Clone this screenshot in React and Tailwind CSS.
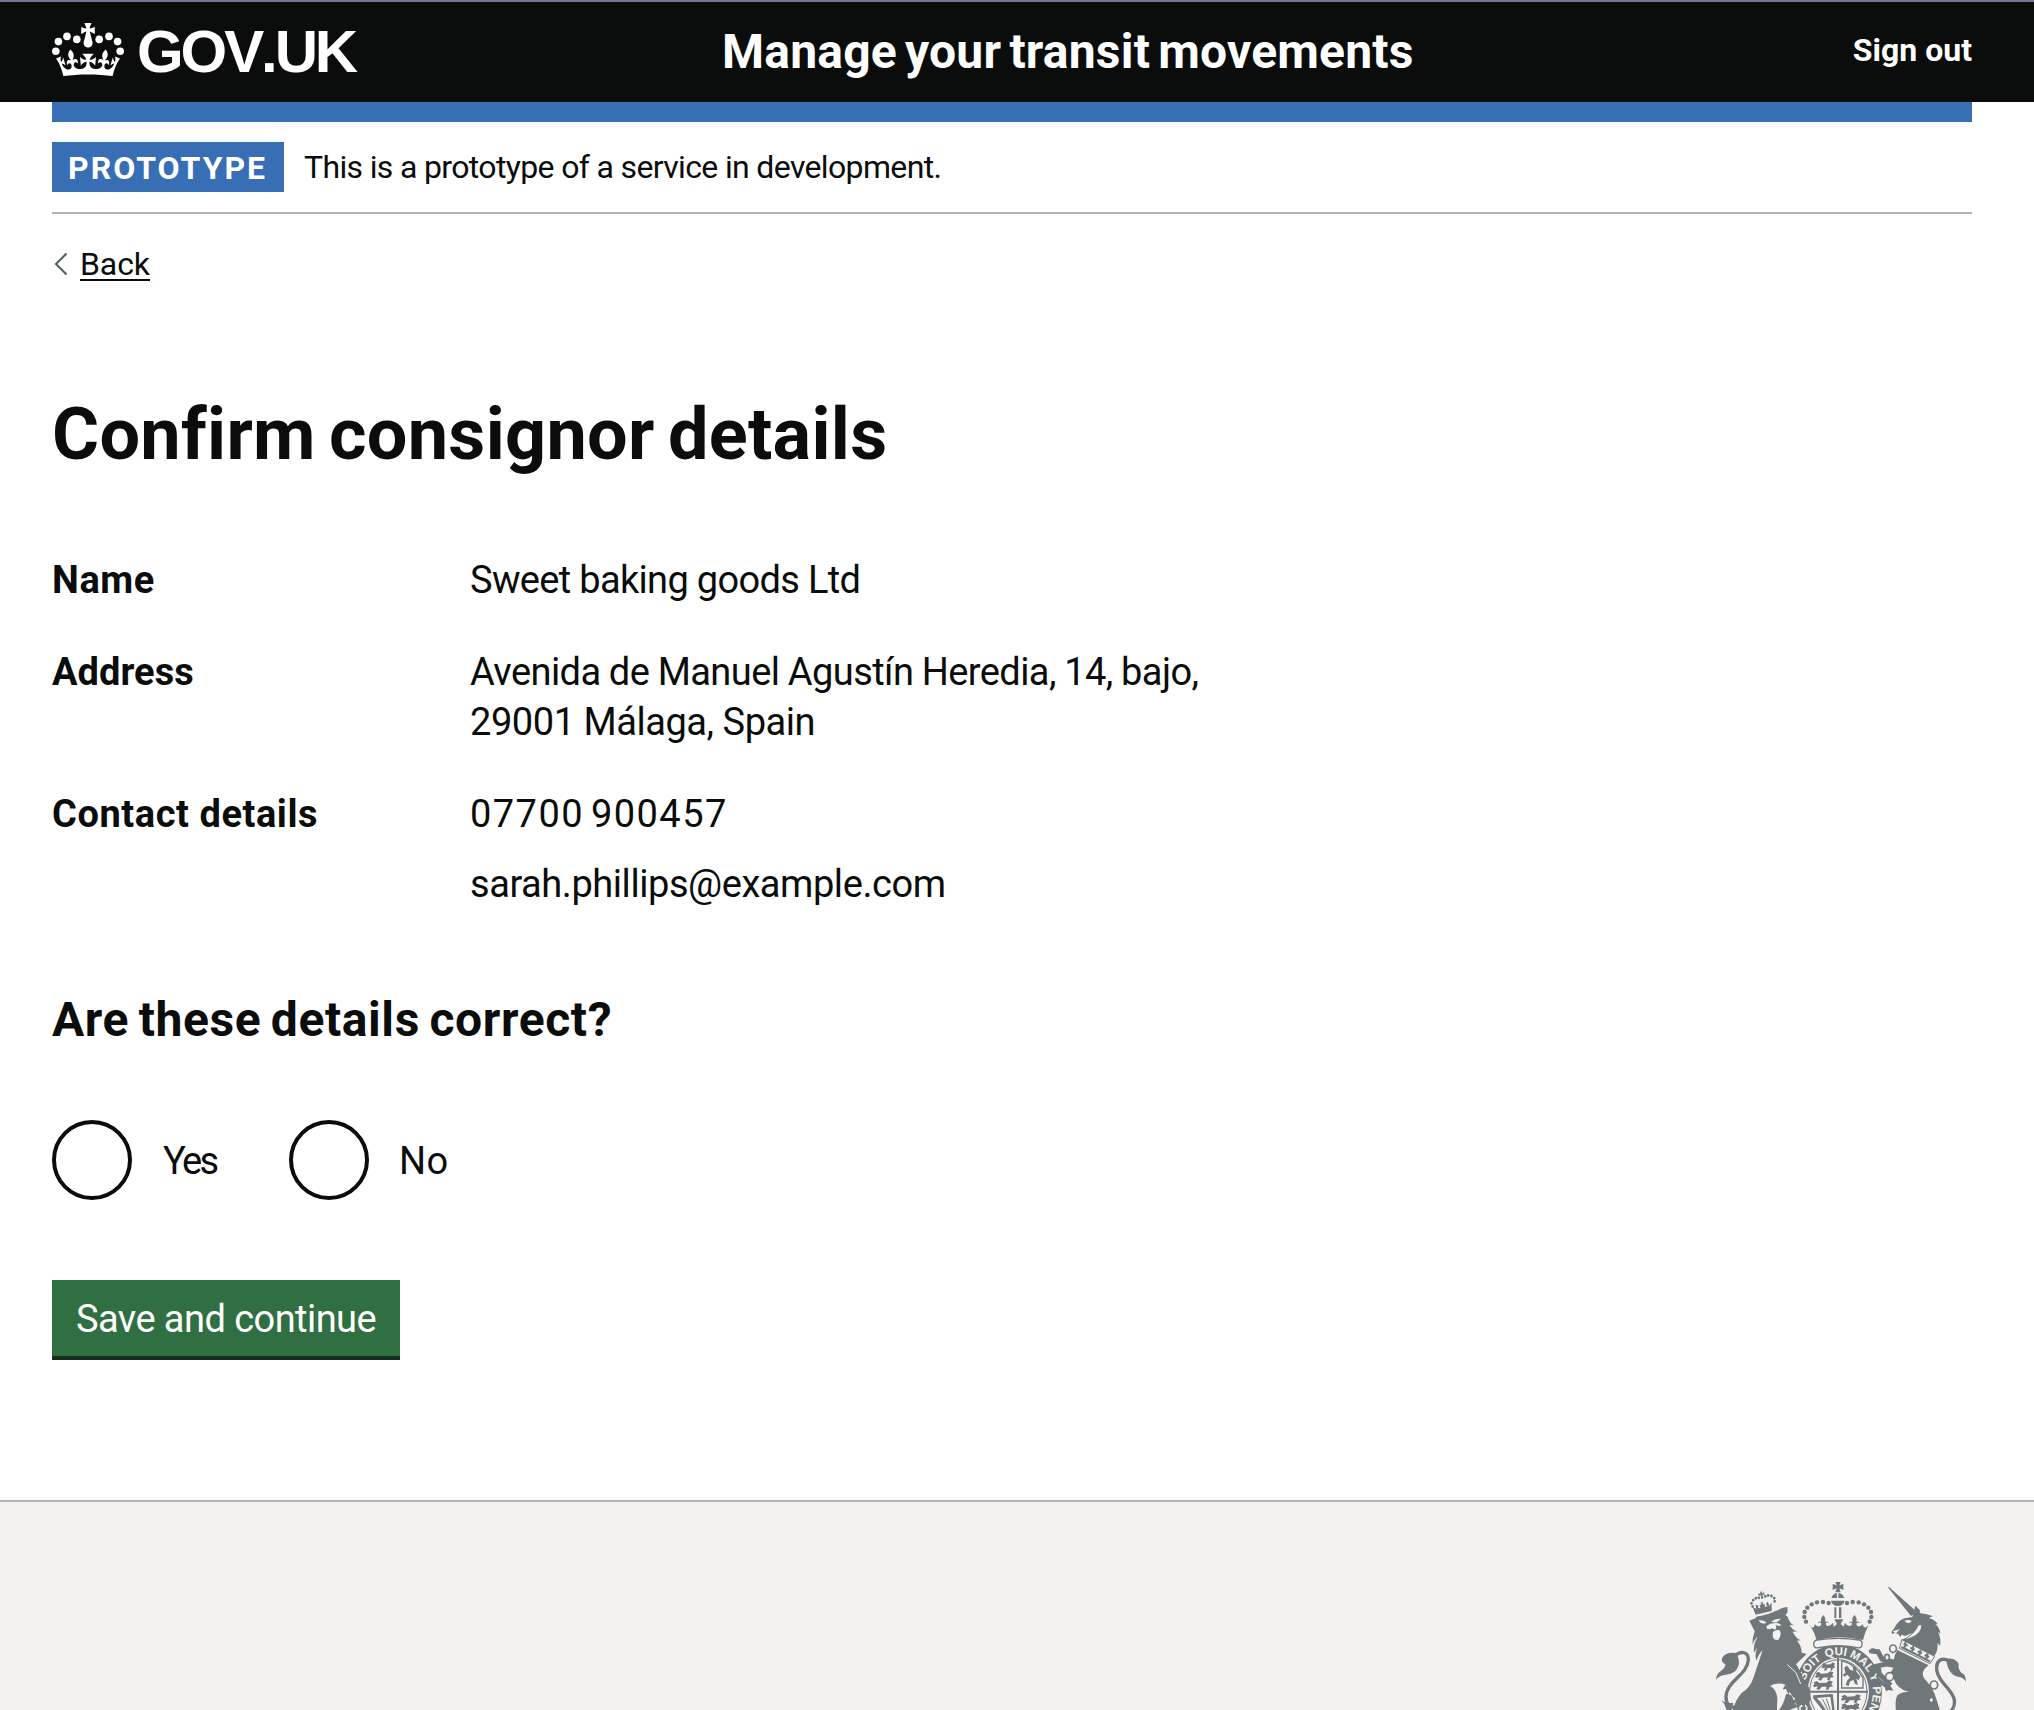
import React from "react";

const CROWN_HALF =
  "M18 29.7c4.4 0 8.6.3 12.3.8 1.1-4.5 2.4-7 3.7-8.8l-2.5-.9c.2 1.3.3 1.9 0 2.7-.4-.4-.8-1.1-1.1-2.3l-1.2 4c.7-.5 1.3-.8 2-.9-1.1 2.5-2.6 3.1-3.5 3-1.1-.2-1.7-1.2-1.5-2.1.3-1.2 1.5-1.5 2.1-.1 1.1-2.3-.8-3-2-2.3 1.9-1.9 2.1-3.5.6-5.6-2.1 1.6-2.1 3.2-1.2 5.5-1.2-1.4-3.2-.6-2.5 1.6.9-1.4 2.1-.5 1.9.8-.2 1.1-1.7 2.1-3.5 1.9-2.7-.2-2.9-2.1-2.9-3.6.7-.1 1.9.5 2.9 1.9l.4-4.3c-1.1 1.1-2.1 1.4-3.2 1.4.4-1.2 2.1-3 2.1-3H17.9V29.7z";

const CROWN_PEARLS = [
  [7.5, 10.7],
  [3.2, 13.3],
  [1.9, 18.1],
  [12.4, 12.2],
];

function Crown() {
  return (
    <svg viewBox="0 0 36 32" className="h-16 w-[72px] shrink-0 fill-white" aria-hidden="true">
      {CROWN_PEARLS.map(([x, y]) => (
        <g key={x}>
          <circle cx={x} cy={y} r="1.9" />
          <circle cx={36 - x} cy={y} r="1.9" />
        </g>
      ))}
      <path d="M19 8.2l2.4 1.3V6l-2.4.8c-.1-.1-.1-.2-.2-.2s1-2.6 1-2.600h-3.6l1 2.6c-.1 0-.1.1-.2.2-.1.1-2.4-.8-2.4-.8v3.5L17 8.2c.1.1.1.2.2.2l-1.3 5c-.1.2-.1.4-.1.6 0 1.2.8 2.1 1.9 2.3h.7c1.1-.2 1.9-1.1 1.9-2.3 0-.2 0-.4-.1-.6l-1.3-5c-.1-.1 0-.1 0-.2z" />
      <path d={CROWN_HALF} />
      <path d={CROWN_HALF} transform="translate(36 0) scale(-1 1)" />
    </svg>
  );
}

const CREST_PEARLS = [
  [386, 99],
  [369, 96],
  [351, 97],
  [335, 103],
  [322, 113],
  [314, 126],
  [313, 141],
  [318, 155],
];

const LION_CROWN_PEARLS = [
  [-34, 4],
  [-35, -6],
  [-28, -14],
  [-19, -18],
  [-10, -17],
  [10, -17],
  [19, -18],
  [28, -14],
  [35, -6],
  [34, 4],
];

const MOTTO = [
  ["O", "18%"],
  ["SOIT", "36%"],
  ["QUI", "48.9%"],
  ["MAL", "60.6%"],
  ["Y", "69%"],
  ["PEN", "78%"],
];

const PASSANT = "M0 4l7-4 5 5 14-1 6-5 7 3-3 6 4 5-7 1-3 7-5-1 2-6-10 0-5 7-6-1 3-8-7 3-3-4 4-3z";

function RoyalArms() {
  return (
    <svg viewBox="0 0 840 420" className="h-[140px] w-[280px] fill-[#6f777b]" aria-hidden="true">
      {/* Crown above the shield */}
      <path d="M406 36h16l-4 10 12-4v18l-12-5 4 12h-16l4-12-12 5v-18l12 4z" />
      <path d="M406 70h5v14h-17q3-10 12-14zM415 70h5q10 4 13 14h-18z" />
      <path d="M393 92h41q-3 15-20 16-18-1-21-16z" />
      {CREST_PEARLS.map(([x, y]) => (
        <g key={x}>
          <circle cx={x} cy={y} r="6.6" />
          <circle cx={827 - x} cy={y} r="6.6" />
        </g>
      ))}
      <path d="M403 112h6v32h-6zM417 112h7v32h-7z" />
      <path d="M328 166q6 9 14 5l2-8q8 8 14 6 8-3 5-10-5-3-10 1 2-8 11-5-4-10 6-20 9 10 5 20 9-3 12 5-5-4-9-1-2 7 5 9 8 1 16-10l2 12 10-8-8-14h27l-8 14 10 8 2-12q8 11 16 10 7-2 5-9-4-3-9 1 3-8 12-5-4-10 5-20 10 10 6 20 9-3 11 5-5-4-10-1-3 7 5 10 6 2 14-6l2 8q8 4 14-5-10 20-16 44-72-17-140 0-4-20-19-44z" />

      {/* Garter, cap band and shield */}
      <ellipse cx="415" cy="365" rx="131" ry="143" />
      <path
        d="M350 210q64-10 128 0 10 2 8 14-2 12-14 9-58-12-116 0-14 3-15-9 0-12 9-14z"
        className="fill-[#f3f2f1] stroke-[#6f777b] stroke-[4]"
      />
      <path id="garter" d="M415 474a104 109 0 0 1 0-218a104 109 0 0 1 0 218" fill="none" />
      {MOTTO.map(([word, at]) => (
        <text
          key={word}
          textAnchor="middle"
          className="fill-[#f3f2f1] text-[35px] font-bold [font-family:'Liberation_Sans',sans-serif]"
        >
          <textPath href="#garter" startOffset={at}>
            {word}
          </textPath>
        </text>
      ))}
      <ellipse cx="415" cy="365" rx="92" ry="102" className="fill-[#f3f2f1]" />
      <ellipse cx="415" cy="365" rx="86" ry="96" className="fill-none stroke-[#6f777b] stroke-[3]" />
      <path d="M411 264h6v156h-6zM326 362h178v6H326z" />
      <path d={PASSANT} transform="translate(366 278) scale(1 1.15)" />
      <path d={PASSANT} transform="translate(346 305) scale(1.4 1.25)" />
      <path d={PASSANT} transform="translate(340 333) scale(1.5 1.25)" />
      <path d="M425 272q44 12 64 52v30h-64z" className="fill-none stroke-[#6f777b] stroke-[4]" />
      <path d="M433 292l9-5 8 12 10 3-2-14 9 3 2 14 12 14-5 12-7-5 5 18-9-2-5-12-10 4-4 14-9-3 5-14 8-8-8-9-8 6-6-6 8-5z" />
      <path d="M340 376l58-4 6 50h-7l-6-42-40 4 26 38h-8l-30-38z" />
      <path d="M358 392l18 28M368 388l16 32M379 386l12 34" className="stroke-[#6f777b] stroke-[3]" />
      <path d={PASSANT} transform="translate(424 374) scale(1.5 1.2)" />
      <path d={PASSANT} transform="translate(424 400) scale(1.4 1.2)" />

      {/* Lion */}
      <g transform="translate(190 98) rotate(-13)">
        {LION_CROWN_PEARLS.map(([x, y]) => (
          <circle key={x + ":" + y} cx={x} cy={y} r="4.2" />
        ))}
        <path d="M-3-34h6l-1 6 7-2v8l-7-2 2 11h-8l2-11-7 2v-8l7 2z" />
        <path d="M-34 6l9 7 1-13 7 5-2 8 7 1-1-9 6-1-2-6h8l-2 6 6 1-1 9 7-1-2-8 7-5 1 13 9-7-5 24h-50z" />
      </g>
      <path d="M148 152l18-7q2-7 14-8 36-8 68-24l14-2 1 16-7 8q10 6 9 12 5 13 16 19l-12-1q8 16 23 19l-14 1q7 17 24 26l-11 1q14 15 14 36l15 4-12 11-20 20q12 16 22 44l17 26 5 34-6 16-9-8-4 18-8-10-10 6 2-14-12 6 2-14-10-8-8-14-3 10-8-18-10 1 8-14q-24-8-46 4 18 8 22 34l-2 60H92q10-46 32-72 26-16 36-46l28-84q-14 14-18 32-8-14 2-40l-10 16q-3-28 12-48-12 8-17 26 0-24 7-42z" />
      <path d="M160 139q42-2 92-30" className="fill-none stroke-[#f3f2f1] stroke-[3]" />
      <path d="M258 372q20-2 22 18l10-4-6 14 10 10-36 14h-24q18-22 24-52z" />
      <path
        d="M176 151q14-2 24 7-16 8-24-7zM214 155q10-9 28-9-10 16-28 9zM199 169l12-8 20-3 14 7-8 3-10-3 2 9-4 5-8-4-8 3-8-2z"
        className="fill-[#f3f2f1]"
      />
      <path d="M219 186q8-8 20-5 8 14-5 29-14 2-16-12z" className="fill-[#f3f2f1]" />
      <path d="M262 284l26 24 14 34" className="fill-none stroke-[#f3f2f1] stroke-[3]" />
      <path
        d="M104 258c20-18 42-12 41 12-2 44-66 64-67 110 0 22 12 36 26 30"
        className="fill-none stroke-[#6f777b] stroke-[10]"
      />
      <path d="M108 249q-28-4-40 12-8 14 8 22 0 12-16 22-10 6-12 24 10-14 30-15 30-4 36-24 8-18-6-41z" />
      <path d="M64 390q14 12 36 8l-6 24H80q-4-20-16-32z" />

      {/* Unicorn */}
      <path d="M563 51l5 1 83 74-18 12z" />
      <path d="M646 107l14 14-1 8q22 2 40 10-8 2-12 6 18 4 26 18l-7-1q14 12 15 29l-7-6q10 20 6 42l-8-8q4 18-8 38l-12-2-46-24-38-20-8 0q22-6 36-22l-20 9-12-4-2 8-8-10-10-4-8 4q-4-8 5-14 12-26 32-33l24-4z" />
      <path
        d="M613 153q10-6 22-1-2 9-14 6zM578 184l22-7-12 13zM664 166q0 24-30 36l-18 6q30-18 40-42z"
        className="fill-[#f3f2f1]"
      />
      <path d="M606 209l98 50-14 22-92-46z" className="fill-[#f3f2f1] stroke-[#6f777b] stroke-[3]" />
      <path
        d="M617 216l-3 16M611 222l12 5M640 228l-4 16M631 233l13 6M662 239l-4 16M653 244l13 6M683 250l-4 16M674 255l13 6M604 231l86 43"
        className="fill-none stroke-[#6f777b] stroke-[6]"
      />
      <path d="M592 240l94 46q-26 18-14 38l18 22q16 24 22 50l8 26H588q-4-32 4-46 14-12 34-10-34-8-44-38l-18-8 16-26q-2-30 12-54z" />
      <path
        d="M512 243l22 2 12 22 38 10M524 290l34-8 26 4M534 288l4 24 34 34"
        className="fill-none stroke-[#6f777b] stroke-[15]"
      />
      <path d="M506 240l16-6 6 10-20 6zM520 286l18-4 4 22-14 6zM528 318l28 22 16 8 8 14-14-2-8 4-4-12-20-14z" />
      <g className="fill-[#f3f2f1] stroke-[#6f777b] stroke-[5]">
        <ellipse cx="579" cy="236" rx="10" ry="11" />
        <ellipse cx="561" cy="262" rx="7" ry="9" />
        <ellipse cx="569" cy="320" rx="12" ry="12" />
        <ellipse cx="702" cy="345" rx="11" ry="12" />
        <ellipse cx="694" cy="390" rx="7" ry="8" />
      </g>
      <path
        d="M746 272c-26-12-40 4-35 32 8 38 46 52 52 86 2 16-2 26-12 34"
        className="fill-none stroke-[#6f777b] stroke-[10]"
      />
      <path d="M738 266q30-4 38 16-2 16 8 26 14 4 14 27-8-14-24-15-30-6-36-54z" />
    </svg>
  );
}

const DETAILS = [
  {
    label: "Name",
    labelClass: "tracking-[0.6px]",
    lines: [["Sweet baking goods Ltd", "tracking-[-0.67px]"]],
  },
  {
    label: "Address",
    labelClass: "tracking-[0.05px]",
    lines: [
      ["Avenida de Manuel Agustín Heredia, 14, bajo,", "tracking-[-0.57px] [word-spacing:-0.5px]"],
      ["29001 Málaga, Spain", "tracking-[-0.45px]"],
    ],
  },
  {
    label: "Contact details",
    labelClass: "tracking-[0.57px]",
    lines: [
      ["07700 900457", "tracking-[1.45px] [word-spacing:-4px]"],
      ["sarah.phillips@example.com", "mt-5 tracking-[-0.44px]"],
    ],
  },
];

export default function App() {
  return (
    <div className="flex h-[1710px] flex-col overflow-hidden bg-white text-[#0b0c0c] [font-family:Roboto,sans-serif]">
      <header className="grid h-[102px] shrink-0 grid-cols-[670px_1fr_auto] items-start border-t-2 border-[#72759a] bg-[#0b0c0c] pr-[62px] pl-[52px] text-white">
        <a href="#" className="flex pt-[13px]">
          <Crown />
          <span className="mt-[7px] ml-[13px] text-[60px] leading-[60px] font-bold tracking-[-3.1px] [font-family:'Liberation_Sans',sans-serif] [font-kerning:none]">
            GOV.UK
          </span>
        </a>
        <div className="pt-5 text-5xl leading-[60px] font-bold tracking-[0.21px] [word-spacing:-4px]">
          Manage your transit movements
        </div>
        <a href="#" className="pt-7 text-[32px] leading-10 font-bold">
          Sign out
        </a>
      </header>

      <div className="ml-[52px] w-[1920px] shrink-0">
        <div className="h-5 bg-[#386eb4]" />
        <div className="flex items-start border-b-2 border-[#b1b4b6] py-5">
          <strong className="h-[50px] w-[232px] bg-[#386eb4] pl-4 text-[32px] leading-[52px] font-bold tracking-[2px] text-white">
            PROTOTYPE
          </strong>
          <span className="ml-5 text-[32px] leading-[50px] tracking-[-0.65px]">
            This is a prototype of a service in development.
          </span>
        </div>

        <a href="#" className="mt-[30px] flex h-10 w-fit items-start text-[32px] leading-10 tracking-[-0.1px]">
          <svg viewBox="0 0 14 24" className="mt-2 mr-3 ml-0.5 h-6 w-3.5 fill-none stroke-[#505a5f] stroke-2">
            <path d="M12.500 1.500L2 12l10.500 10.500" />
          </svg>
          <span className="h-[37px] border-b-2 border-[#0b0c0c]">Back</span>
        </a>

        <main>
          <h1 className="mt-[111px] text-[72px] leading-[80px] font-bold tracking-[0.3px] [word-spacing:-5px]">
            Confirm consignor details
          </h1>

          <dl className="mt-20 flex flex-col gap-[42px] text-[38px] leading-[50px]">
            {DETAILS.map(({ label, labelClass, lines }) => (
              <div key={label} className="grid grid-cols-[418px_1fr]">
                <dt className="font-bold">
                  <span className={labelClass}>{label}</span>
                </dt>
                <dd>
                  {lines.map(([text, textClass]) => (
                    <p key={text} className={textClass}>
                      {text}
                    </p>
                  ))}
                </dd>
              </div>
            ))}
          </dl>

          <h2 className="mt-[81px] text-5xl leading-[60px] font-bold tracking-[0.6px] [word-spacing:-3px]">
            Are these details correct?
          </h2>

          <div className="mt-[70px] flex text-[38px] leading-[80px]">
            <label className="flex w-[237px]">
              <span className="mr-[31px] size-20 rounded-full border-4 border-[#0b0c0c]" />
              <span className="h-20 pt-px tracking-[-2.6px]">Yes</span>
            </label>
            <label className="flex">
              <span className="mr-[30px] size-20 rounded-full border-4 border-[#0b0c0c]" />
              <span className="h-20 pt-px tracking-[0.5px]">No</span>
            </label>
          </div>

          <button className="mt-20 block h-20 w-[348px] border-b-4 border-[#132e1c] bg-[#2f6f41] text-[38px] leading-[78px] tracking-[-0.55px] text-white">
            Save and continue
          </button>
        </main>
      </div>

      <footer className="mt-[140px] flex flex-1 justify-end border-t-2 border-[#b1b4b6] bg-[#f3f2f1] pt-[68px] pr-[54px]">
        <RoyalArms />
      </footer>
    </div>
  );
}
